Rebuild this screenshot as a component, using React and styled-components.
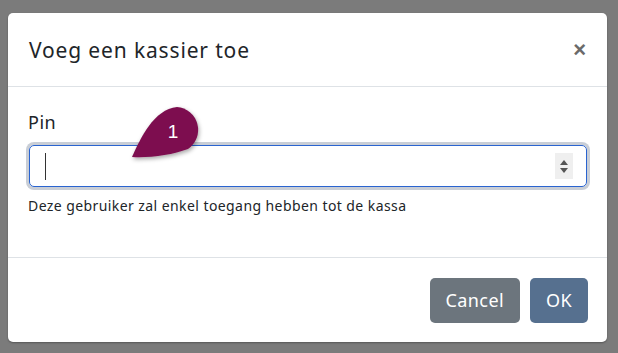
import React from "react";
import styled, { createGlobalStyle } from "styled-components";

const Global = createGlobalStyle`
  html, body { margin: 0; padding: 0; }
  body {
    width: 618px; height: 353px; overflow: hidden;
    background: #7b7b7b;
    font-family: "Noto Sans", Lato, sans-serif;
    color: #212529;
  }
`;

const Backdrop = styled.div`
  padding: 13px 11px 11px 8px;
  box-sizing: border-box;
  height: 353px;
`;

const Dialog = styled.div`
  background: #fff;
  border-radius: 5px;
  height: 329px;
  display: flex;
  flex-direction: column;
  box-shadow: 0 1px 2px rgba(0,0,0,0.3);
`;

const Header = styled.div`
  display: flex;
  align-items: center;
  justify-content: space-between;
  height: 74px;
  padding: 0 21px 0 21px;
  box-sizing: border-box;
  border-bottom: 1px solid #dee2e6;
`;

const Title = styled.h1`
  margin: 0;
  font-size: 21px;
  font-weight: 400;
  letter-spacing: 0.85px;
`;

const Close = styled.button`
  border: 0;
  background: none;
  padding: 0;
  font-family: "Liberation Sans", Arial, sans-serif;
  font-size: 22px;
  font-weight: 700;
  color: #6a6a6a;
  line-height: 1;
`;

const Body = styled.div`
  position: relative;
  flex: 1;
  padding: 24px 19px 0 20px;
  border-bottom: 1px solid #dee2e6;
`;

const Label = styled.label`
  display: block;
  font-size: 18px;
  line-height: 22px;
  margin-bottom: 12px;
  letter-spacing: 0.5px;
`;

const InputWrap = styled.div`
  position: relative;
  height: 42px;
  border: 1px solid #2a64d0;
  border-radius: 5px;
  box-shadow: 0 0 0 3px #c9ced6;
  display: flex;
  align-items: center;
  padding: 0 13px 0 15px;
  box-sizing: border-box;
  margin: 0 1px;
`;

const Caret = styled.span`
  width: 1px;
  height: 27px;
  background: #333;
`;

const Spinner = styled.div`
  margin-left: auto;
  width: 18px;
  height: 26px;
  background: #efefef;
  display: flex;
  flex-direction: column;
  align-items: center;
  justify-content: center;
  gap: 3px;
`;

const Help = styled.div`
  font-size: 14px;
  line-height: 20px;
  margin-top: 9px;
  letter-spacing: 0.42px;
`;

const Marker = styled.svg`
  position: absolute;
  left: 120px;
  top: 16px;
  overflow: visible;
`;

const Footer = styled.div`
  height: 84px;
  display: flex;
  justify-content: flex-end;
  align-items: center;
  gap: 10px;
  padding: 0 19px 0 0;
  box-sizing: border-box;
`;

const Button = styled.button`
  height: 45px;
  padding: 0 ${p => p.$pad}px;
  border: 0;
  border-radius: 5px;
  background: ${p => p.$bg};
  color: #fff;
  font-family: "Noto Sans", Lato, sans-serif;
  font-size: 18px;
  letter-spacing: 0.4px;
`;

export default function App() {
  return (
    <>
      <Global />
      <Backdrop>
        <Dialog>
          <Header>
            <Title>Voeg een kassier toe</Title>
            <Close>×</Close>
          </Header>
          <Body>
            <Label>Pin</Label>
            <InputWrap>
              <Caret />
              <Spinner>
                <svg width="8" height="5" viewBox="0 0 8 5"><path d="M0 5 L4 0 L8 5 Z" fill="#555" /></svg>
                <svg width="8" height="5" viewBox="0 0 8 5"><path d="M0 0 L4 5 L8 0 Z" fill="#555" /></svg>
              </Spinner>
            </InputWrap>
            <Help>Deze gebruiker zal enkel toegang hebben tot de kassa</Help>
            <Marker width="80" height="60" viewBox="0 0 80 60">
              <defs>
                <filter id="sh" x="-30%" y="-30%" width="160%" height="160%">
                  <feDropShadow dx="1" dy="2" stdDeviation="2" floodColor="#000" floodOpacity="0.35" />
                </filter>
              </defs>
              <path
                d="M4 54 C 12 36, 26 6, 49 4 A 23 23 0 0 1 60 46 C 44 52, 22 55, 4 54 Z"
                fill="#7d1150"
                filter="url(#sh)"
              />
              <text x="45" y="35" textAnchor="middle" fill="#fff" fontFamily="Liberation Sans, Arial, sans-serif" fontSize="19">1</text>
            </Marker>
          </Body>
          <Footer>
            <Button $bg="#6c757d" $pad={16}>Cancel</Button>
            <Button $bg="#56708f" $pad={16}>OK</Button>
          </Footer>
        </Dialog>
      </Backdrop>
    </>
  );
}
